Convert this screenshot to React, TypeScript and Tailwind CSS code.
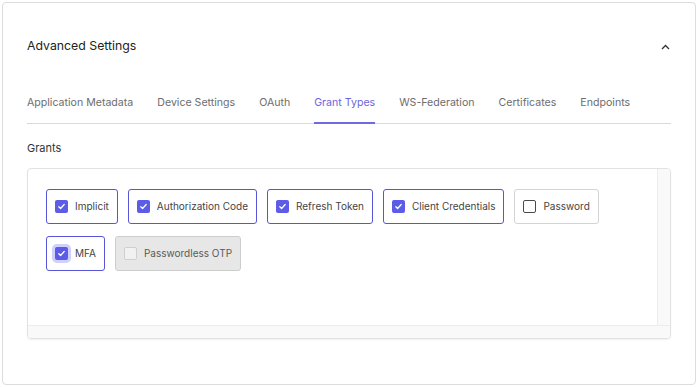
import React from 'react';

type Grant = { label: string; checked: boolean; disabled?: boolean; focused?: boolean };

const rowOne: Grant[] = [
  { label: 'Implicit', checked: true },
  { label: 'Authorization Code', checked: true },
  { label: 'Refresh Token', checked: true },
  { label: 'Client Credentials', checked: true },
  { label: 'Password', checked: false },
];

const rowTwo: Grant[] = [
  { label: 'MFA', checked: true, focused: true },
  { label: 'Passwordless OTP', checked: false, disabled: true },
];

const tabs = ['Application Metadata', 'Device Settings', 'OAuth', 'Grant Types', 'WS-Federation', 'Certificates', 'Endpoints'];

const Box = ({ grant }: { grant: Grant }) => {
  if (grant.checked) {
    return (
      <span
        className={`flex h-[13px] w-[13px] shrink-0 items-center justify-center rounded-[2px] bg-[#5c5ce6] ${
          grant.focused ? 'ring-[3px] ring-[#cfd0fb]' : ''
        }`}
      >
        <svg width="9" height="9" viewBox="0 0 10 10" fill="none">
          <path d="M2 5.2l2 2 4-4.4" stroke="#fff" strokeWidth="1.4" strokeLinecap="round" strokeLinejoin="round" />
        </svg>
      </span>
    );
  }
  return (
    <span
      className={`h-[13px] w-[13px] shrink-0 rounded-[2px] border ${
        grant.disabled ? 'border-[#cfcfcf] bg-[#f1f1f1]' : 'border-[#4a4a4a] bg-white'
      }`}
    />
  );
};

const Chip = ({ grant }: { grant: Grant }) => {
  const tone = grant.disabled
    ? 'border-[#cdcdcd] bg-[#e7e7e7] text-[#5a5a5a]'
    : grant.checked
    ? 'border-[#5856d6] bg-white text-[#444]'
    : 'border-[#d4d4d4] bg-white text-[#444]';
  return (
    <div
      className={`flex h-[35px] items-center gap-[7px] whitespace-nowrap rounded-[3px] border-[1.5px] pl-[8px] pr-[8px] text-[10px] ${tone}`}
    >
      <Box grant={grant} />
      <span>{grant.label}</span>
    </div>
  );
};

export default function App() {
  return (
    <div className="h-[387px] w-[698px] bg-white p-[2px]" style={{ fontFamily: 'Inter, "Noto Sans", sans-serif' }}>
      <div className="flex h-full flex-col rounded-[4px] border border-[#dcdcdc] px-6">
        <div className="flex h-[87px] shrink-0 items-center justify-between">
          <span className="text-[12.3px] text-[#222]">Advanced Settings</span>
          <svg width="9" height="6" viewBox="0 0 9 6" fill="none" className="mr-[1px]">
            <path d="M1 5l3.5-3.5L8 5" stroke="#333" strokeWidth="1.3" />
          </svg>
        </div>

        <div className="flex h-[34px] shrink-0 gap-6 border-b border-[#d9d9d9]">
          {tabs.map(t => (
            <div
              key={t}
              className={`-mb-px whitespace-nowrap pt-[5px] text-[10.6px] ${
                t === 'Grant Types' ? 'border-b-2 border-[#6f6ae0] text-[#6a66dc]' : 'text-[#6d6d6d]'
              }`}
            >
              {t}
            </div>
          ))}
        </div>

        <div className="mt-[16px] text-[11px] leading-[16px] text-[#333]">Grants</div>

        <div className="mt-[12px] flex h-[171px] flex-col overflow-hidden rounded-[4px] border border-[#e2e2e2] shadow-[0_1px_2px_rgba(0,0,0,0.06)]">
          <div className="flex flex-1">
            <div className="flex flex-1 flex-col gap-[12px] pl-[18px] pt-[20px]">
              <div className="flex gap-[10px]">
                {rowOne.map(g => <Chip key={g.label} grant={g} />)}
              </div>
              <div className="flex gap-[10px]">
                {rowTwo.map(g => <Chip key={g.label} grant={g} />)}
              </div>
            </div>
            <div className="w-[13px] border-l border-[#ececec] bg-[#f9f9f9]" />
          </div>
          <div className="h-[13px] border-t border-[#ececec] bg-[#f9f9f9]" />
        </div>
      </div>
    </div>
  );
}
